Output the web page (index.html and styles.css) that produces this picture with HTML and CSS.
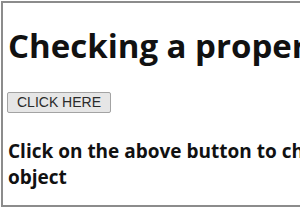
FILE: index.html
```html
<!DOCTYPE html>
<html>
<head>
<meta charset="utf-8">
<link rel="stylesheet" href="styles.css">
</head>
<body>
<div class="frame">
  <h1 class="title">Checking a property of an object</h1>
  <button class="btn">CLICK HERE</button>
  <p class="msg">Click on the above button to check whether the property exists in the object</p>
</div>
</body>
</html>
```
FILE: styles.css
```css
html, body {
  margin: 0;
  padding: 0;
  overflow: hidden;
  background: #fff;
}
body {
  width: 300px;
  height: 210px;
}
.frame {
  margin: 1px 0 0 1px;
  width: 760px;
  height: 206px;
  border: 2px solid #8c8c8c;
  border-right: none;
  box-sizing: border-box;
  padding: 0 5px;
  font-family: "Open Sans", sans-serif;
  color: #111;
  overflow: hidden;
}
.title {
  font-size: 33px;
  font-weight: 700;
  margin: 20px 0 0;
  line-height: 46px;
  white-space: nowrap;
}
.btn {
  margin-top: 23px;
  margin-left: -1px;
  font-family: "Liberation Sans", Arial, sans-serif;
  font-size: 14px;
  color: #2a2a2a;
  background: #e6e6e6;
  border: 1px solid #a3a3a3;
  border-radius: 2px;
  padding: 1px 9px;
  height: 21px;
  line-height: 17px;
}
.msg {
  font-size: 19px;
  font-weight: 700;
  margin: 25px 0 0;
  line-height: 26px;
  width: 680px;
}
```
